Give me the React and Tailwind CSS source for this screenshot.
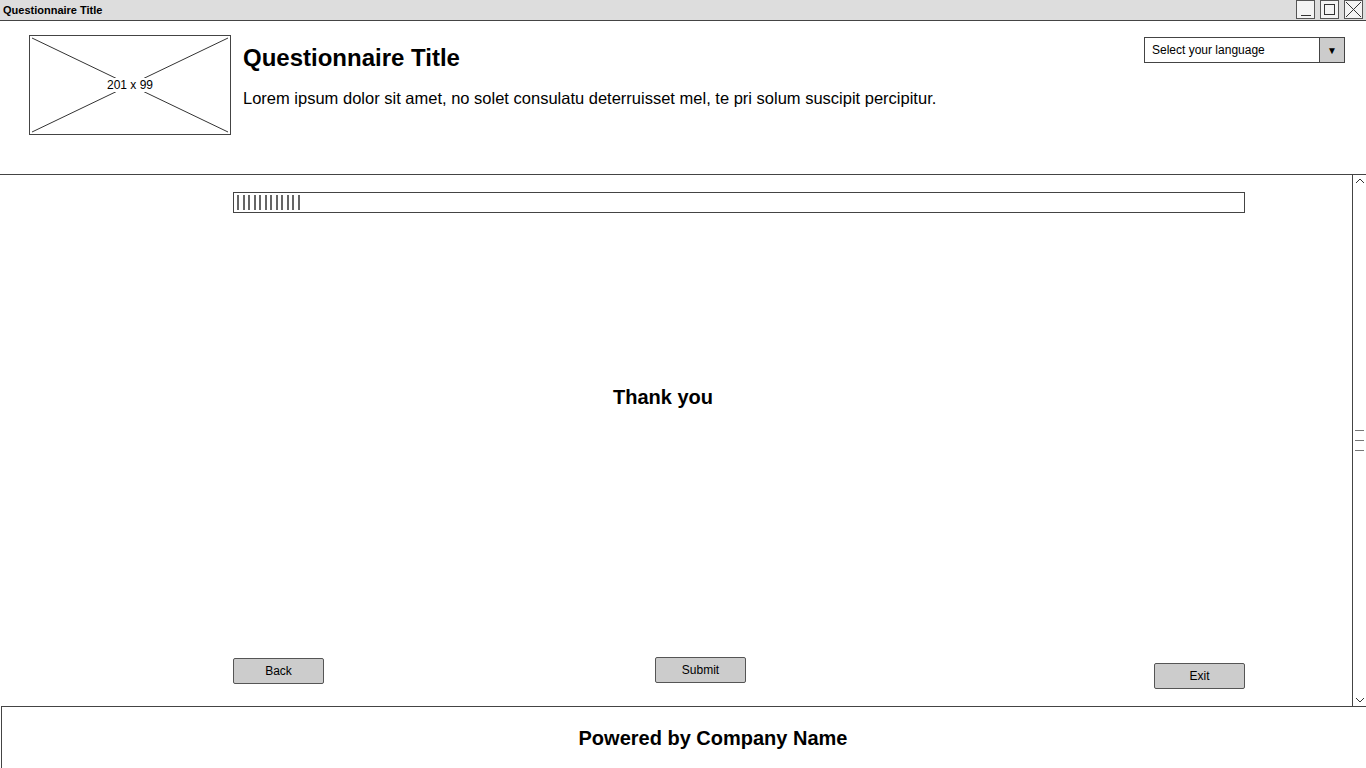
import React from 'react';

const hand = 'font-["Comic_Sans_MS","Liberation_Sans",sans-serif]';

const WinButton = ({ children }) => (
  <div className="w-[19px] h-[19px] border border-[#555] bg-[#f4f4f4] flex items-center justify-center">
    {children}
  </div>
);

const Button = ({ label, className = '' }) => (
  <button className={`w-[91px] h-[26px] bg-[#cccccc] border border-[#555] rounded-[2px] text-[12px] text-black ${hand} ${className}`}>
    {label}
  </button>
);

export default function App() {
  const stripes = Array.from({ length: 12 });

  return (
    <div className="w-[1366px] h-[768px] flex flex-col bg-white overflow-hidden font-['Liberation_Sans',Arial,sans-serif] text-black">
      {/* title bar */}
      <div className="h-[21px] shrink-0 bg-[#dddddd] border-b border-[#444] flex items-center justify-between pl-[3px] pr-[3px]">
        <span className={`text-[11px] font-bold ${hand}`}>Questionnaire Title</span>
        <div className="flex gap-[5px] items-start self-start">
          <WinButton>
            <div className="w-[10px] h-[1px] bg-[#333] mt-[11px]" />
          </WinButton>
          <WinButton>
            <div className="w-[11px] h-[11px] border border-[#333]" />
          </WinButton>
          <WinButton>
            <svg width="17" height="17" viewBox="0 0 17 17">
              <path d="M1 1 L16 16 M16 1 L1 16" stroke="#333" strokeWidth="1" fill="none" />
            </svg>
          </WinButton>
        </div>
      </div>

      {/* header */}
      <div className="h-[154px] shrink-0 border-b border-[#444] flex items-start pl-[29px] pr-[21px] pt-[14px]">
        <div className="relative w-[202px] h-[100px] border border-[#444] shrink-0">
          <svg className="absolute inset-0" width="200" height="98" viewBox="0 0 200 98">
            <path d="M2 2 L198 96 M198 2 L2 96" stroke="#333" strokeWidth="1" fill="none" />
          </svg>
          <div className="absolute inset-0 flex items-center justify-center">
            <span className="bg-white px-[2px] text-[12px] leading-[14px]">201 x 99</span>
          </div>
        </div>
        <div className="ml-[12px] pt-[9px] flex-1">
          <h1 className="text-[24px] font-bold leading-[28px]">Questionnaire Title</h1>
          <p className={`mt-[16px] text-[16.5px] leading-[20px] ${hand}`}>
            Lorem ipsum dolor sit amet, no solet consulatu deterruisset mel, te pri solum suscipit percipitur.
          </p>
        </div>
        <div className="mt-[2px] w-[201px] h-[26px] border border-[#444] flex shrink-0">
          <div className={`flex-1 flex items-center pl-[7px] text-[12px] ${hand}`}>Select your language</div>
          <div className="w-[25px] border-l border-[#444] bg-[#cccccc] flex items-center justify-center text-[10px]">▼</div>
        </div>
      </div>

      {/* content */}
      <div className="flex-1 flex min-h-0">
        <div className="flex-1 flex flex-col pl-[233px] pr-[107px] pt-[17px] pb-[17px]">
          <div className="h-[21px] border border-[#444] flex items-center gap-[3.5px] pl-[3px]">
            {stripes.map((_, i) => (
              <div key={i} className="w-[2px] h-[15px] bg-[#666]" />
            ))}
          </div>
          <div className="flex-1 flex items-center justify-center pr-[152px] pb-[76px]">
            <h2 className="text-[20px] font-bold">Thank you</h2>
          </div>
          <div className="flex items-start">
            <Button label="Back" className="mt-[1px]" />
            <Button label="Submit" className="ml-[331px]" />
            <Button label="Exit" className="ml-auto mt-[6px]" />
          </div>
        </div>
        <div className="w-[14px] shrink-0 border-l border-[#444] flex flex-col items-center py-[2px]">
          <svg width="10" height="8" viewBox="0 0 10 8">
            <path d="M1 6 L5 2 L9 6" stroke="#333" strokeWidth="1" fill="none" />
          </svg>
          <div className="flex flex-col gap-[9px] mt-[245px]">
            <div className="w-[9px] h-[1px] bg-[#777]" />
            <div className="w-[9px] h-[1px] bg-[#777]" />
            <div className="w-[9px] h-[1px] bg-[#777]" />
          </div>
          <div className="flex-1" />
          <svg width="10" height="8" viewBox="0 0 10 8">
            <path d="M1 2 L5 6 L9 2" stroke="#333" strokeWidth="1" fill="none" />
          </svg>
        </div>
      </div>

      {/* footer */}
      <div className="h-[62px] shrink-0 border-t border-l border-[#444] ml-[1px] flex items-center justify-center">
        <span className="text-[20px] font-bold pl-[58px]">Powered by Company Name</span>
      </div>
    </div>
  );
}
